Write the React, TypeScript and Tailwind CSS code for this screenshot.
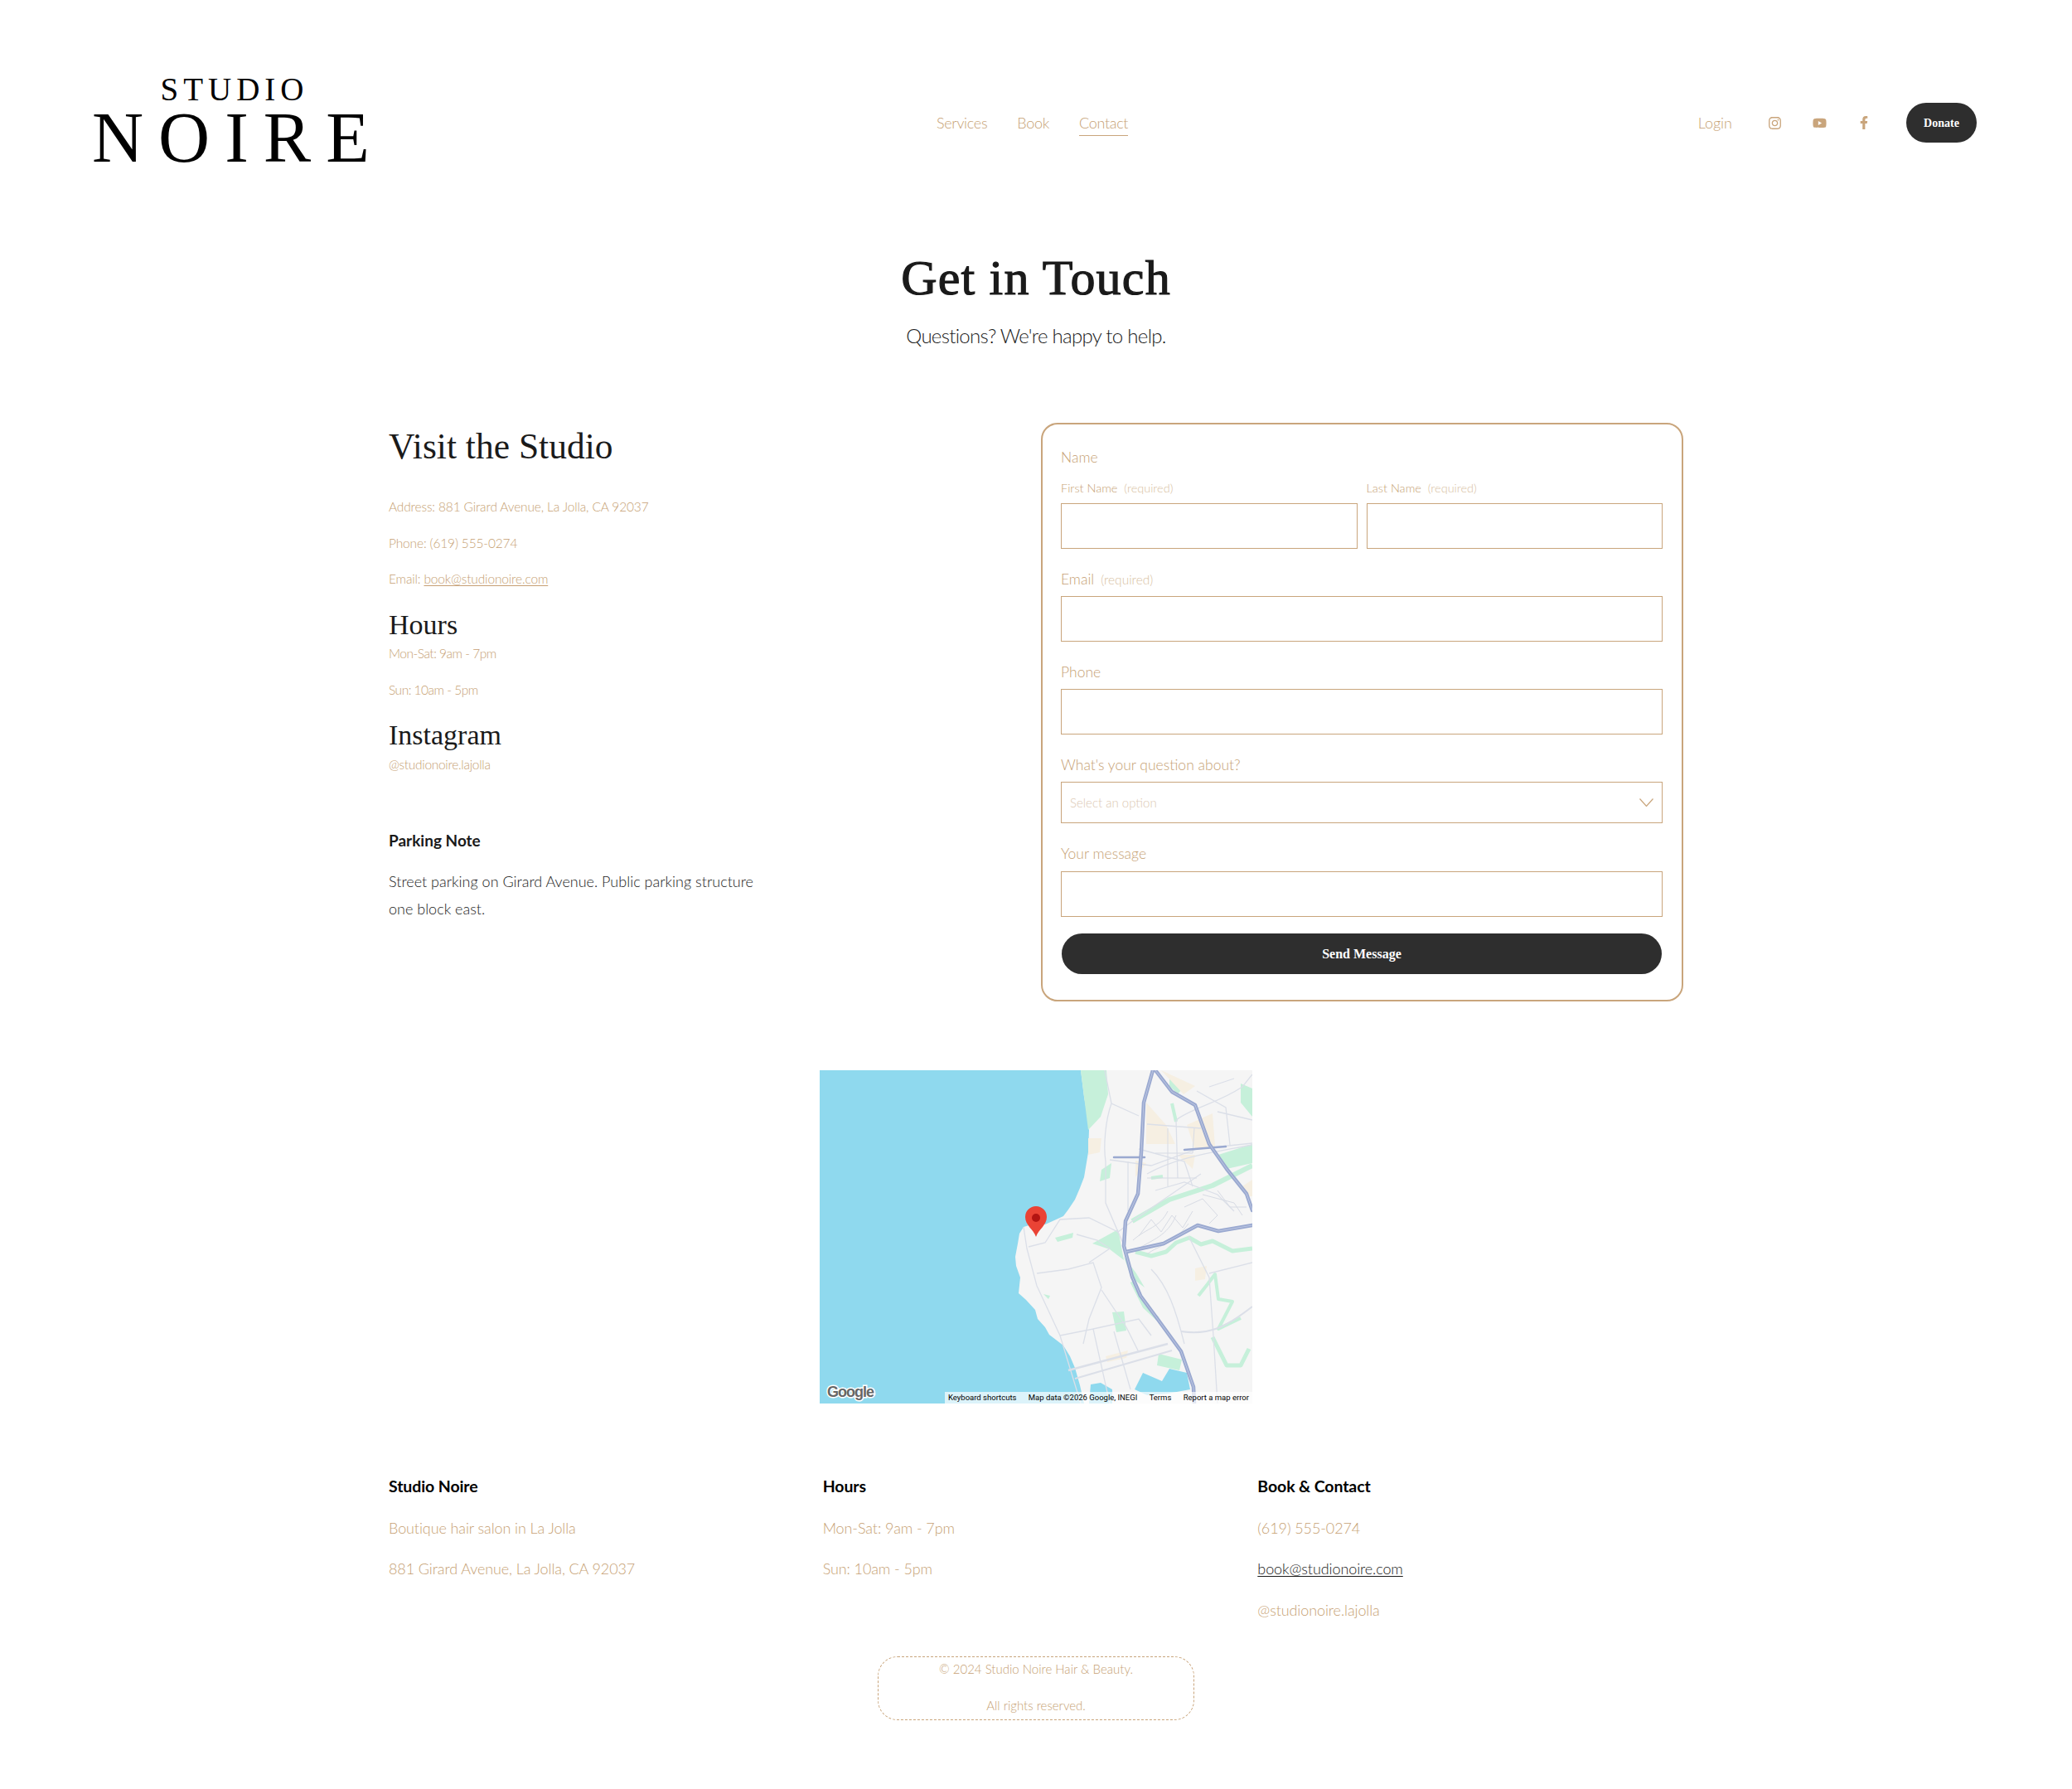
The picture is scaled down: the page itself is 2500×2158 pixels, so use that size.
import { FaFacebookF, FaInstagram, FaYoutube } from "react-icons/fa";

const serif = "font-['Liberation_Serif',serif]";

function Field({ label, note, box }: { label: string; note?: string; box: string }) {
  return (
    <label className="block">
      <span className="block text-[17.5px] leading-[24px] text-[#c69f74]">
        {label}
        {note && <span className="ml-2 text-[15.5px] text-[#d8bfa3]">{note}</span>}
      </span>
      <span className={`block border border-[#c9a57c] ${box}`} />
    </label>
  );
}

function MapView() {
  return (
    <div className="relative mx-auto mt-[84px] h-[402px] w-[522px] overflow-hidden">
      <svg viewBox="0 0 522 402" className="block h-full w-full">
        <rect width="522" height="402" fill="#8fd9ee" />
        <path
          d="M315 0 L319 32 L323 55 L325 72 L324 99 L319 129 L314 142 L308 156 L300 168 L294 176 L281 182 L272 186 L263 184 L246 189 L241 197 L239 209 L236 225 L237 236 L242 250 L240 269 L249 277 L260 289 L263 300 L272 310 L277 319 L294 332 L302 345 L308 359 L314 380 L319 402 L522 402 L522 0 Z"
          fill="#f5f5f5"
        />
        {/* parks */}
        <g fill="#c6f0da">
          <path d="M315 0 L346 0 L348 29 L339 56 L324 72 L319 32 Z" />
          <path d="M422 9 L440 19 L432 29 L422 19 Z" />
          <path d="M508 16 L522 22 L522 56 L508 39 Z" />
          <path d="M481 102 L522 89 L522 112 L491 119 Z" />
          <path d="M329 209 L360 192 L367 229 L350 216 Z" />
          <path d="M367 225 L382 245 L392 262 L376 250 Z" />
          <path d="M284 202 L306 196 L305 202 L287 207 Z" />
          <path d="M353 292 L367 291 L370 314 L358 316 Z" />
          <path d="M409 342 L437 349 L434 362 L407 356 Z" />
          <path d="M340 120 L352 112 L350 130 L338 134 Z" />
          <path d="M270 270 L278 272 L276 276 Z" />
        </g>
        <g fill="none" stroke="#c6f0da" strokeLinejoin="round">
          <path d="M377 182 L422 156 L474 139 L522 115" strokeWidth="6" />
          <path d="M381 219 L400 224 L418 219 L430 208 L446 202 L460 210 L474 206 L498 218 L522 215" strokeWidth="5" />
          <path d="M457 272 L468 258 L477 246 L481 276 L498 279 L481 312 L508 299" strokeWidth="4" />
          <path d="M474 322 L491 356 L508 356 L518 336" strokeWidth="5" />
          <path d="M400 60 L408 85 M425 40 L430 62 M400 130 L414 128" strokeWidth="4" />
          <path d="M377 255 L392 285 L408 300" strokeWidth="5" />
        </g>
        {/* built up areas */}
        <g fill="#f6efe2">
          <path d="M394 39 L418 66 L429 89 L394 89 Z" />
          <path d="M443 66 L474 52 L477 92 L453 96 Z" />
          <path d="M381 109 L394 112 L381 129 Z" />
          <path d="M432 102 L453 102 L450 119 Z" />
          <path d="M453 239 L467 236 L465 252 L453 254 Z" />
          <path d="M412 0 L453 19 L439 29 Z" />
          <path d="M324 82 L340 82 L338 99 L324 102 Z" />
          <path d="M345 345 L372 338 L370 347 L347 352 Z" />
          <path d="M510 140 L522 132 L522 152 L514 152 Z" />
        </g>
        {/* bay */}
        <path
          d="M380 385 L390 365 L413 375 L422 360 L443 365 L447 385 L420 390 L395 392 Z M325 402 L327 379 L339 377 L353 385 L353 402 Z"
          fill="#8fd9ee"
        />
        {/* local roads */}
        <g fill="none" stroke="#dbdfe8" strokeWidth="1.3">
          <path d="M344 0 L352 40 L385 55" />
          <path d="M352 40 C345 60 342 90 345 110 L345 160 L360 195 L372 222" />
          <path d="M246 189 L250 215 L262 260 L290 320 L315 402" />
          <path d="M252 213 L272 208 L290 180 L325 178 L360 195 L380 180 L460 125" />
          <path d="M262 245 L300 240 L330 232 L340 262 L325 300 L318 330" />
          <path d="M325 232 L350 215 L335 205 L310 198" />
          <path d="M340 265 L370 310 L385 340" />
          <path d="M290 320 L330 312 L350 402" />
          <path d="M330 312 L385 300 L400 320" />
          <path d="M355 315 L375 385" />
          <path d="M300 362 L420 330" strokeWidth="2.5" />
          <path d="M308 372 L425 338" strokeWidth="2" />
          <path d="M436 315 C470 320 490 310 522 285" strokeWidth="2" />
          <path d="M445 200 L470 250 L475 320 L480 402" />
          <path d="M470 245 L522 232" />
          <path d="M395 125 C430 105 470 100 522 90" />
          <path d="M350 108 L400 115 L455 95 L522 88" />
          <path d="M430 60 C450 45 480 40 510 20 L522 5" />
          <path d="M400 240 C420 260 430 290 440 330" />
          <path d="M405 145 L440 135 L480 150 L500 170" />
          <path d="M385 95 L440 110 L450 140 M430 60 L432 130 M395 65 L460 70 M372 110 L372 170" />
          <path d="M455 25 L490 45 L495 90 M470 20 L500 10 M480 50 L522 60" />
        </g>
        {/* subdivision streets */}
        <g fill="none" stroke="#d7dbe4" strokeWidth="1">
          <path d="M378 205 C395 190 410 190 420 170 M385 215 C400 205 420 200 430 175 M395 222 C410 210 425 212 445 185" />
          <path d="M440 165 L462 155 L480 175 L470 185 M462 150 L500 160 L510 175 M480 145 L495 165 L515 165" />
          <path d="M405 100 L450 100 L452 70 M395 130 L455 130 M420 70 L420 140" />
          <path d="M385 200 L400 180 L412 195 L425 175 L438 190 L450 170" />
        </g>
        {/* freeways */}
        <g fill="none" stroke="#9aa9d0" strokeLinecap="round" strokeLinejoin="round" strokeWidth="4.5">
          <path d="M402 0 L391 39 L388 99 L384 149 L369 182 L367 212 L377 249 L387 272 L412 306 L436 339 L451 382 L452 402" />
          <path d="M405 0 L425 26 L453 42 L470 89 L491 119 L515 149 L522 169" />
          <path d="M370 219 L415 209 L456 187 L481 194 L522 187" />
          <path d="M355 105 L392 105 M440 96 L490 92" strokeWidth="2.5" />
        </g>
        <g fill="none" stroke="#bcc6e2" strokeLinecap="round" strokeLinejoin="round" strokeWidth="1">
          <path d="M402 0 L391 39 L388 99 L384 149 L369 182 L367 212 L377 249 L387 272 L412 306 L436 339 L451 382 L452 402" />
          <path d="M405 0 L425 26 L453 42 L470 89 L491 119 L515 149 L522 169" />
          <path d="M370 219 L415 209 L456 187 L481 194 L522 187" />
        </g>
        {/* pin */}
        <path
          d="M261 201 C258 192 248 187 248 177 A13 13 0 0 1 274 177 C274 187 264 192 261 201 Z"
          fill="#ea4335"
        />
        <circle cx="261" cy="178" r="5" fill="#b31412" />
        <text
          x="9"
          y="394"
          fill="#666666"
          stroke="#ffffff"
          strokeWidth="3"
          paintOrder="stroke"
          fontFamily="Liberation Sans, sans-serif"
          fontSize="18"
          fontWeight="700"
          letterSpacing="-1"
        >
          Google
        </text>
      </svg>
      <div className="absolute bottom-0 right-0 flex h-[14px] w-[371px] items-center justify-between bg-[#ffffffb0] px-[4px] font-['Roboto',sans-serif] text-[9.5px] font-normal leading-none text-black">
        <span>Keyboard shortcuts</span>
        <span>Map data ©2026 Google, INEGI</span>
        <span>Terms</span>
        <span>Report a map error</span>
      </div>
    </div>
  );
}

export default function App() {
  return (
    <div className="min-h-[2158px] bg-white font-['Lato',sans-serif] font-light text-[#1a1a1a]">
      <header className="flex h-[227px] items-start pl-[111px] pr-[115px] pt-[90px]">
        <div className={`w-[336px] shrink-0 text-center text-black ${serif}`}>
          <div className="pl-[8px] pt-[3px] text-[39px] leading-[30px] tracking-[6px]">STUDIO</div>
          <div className="mt-[5px] text-[86px] leading-[76px] tracking-[18px]">NOIRE</div>
        </div>
        <nav className="ml-[683px] mt-[44px] flex gap-[36px] text-[18px] leading-[28px] tracking-[-0.3px] text-[#c69f74]">
          <a>Services</a>
          <a>Book</a>
          <a className="border-b border-[#c9a57c] pb-[1px]">Contact</a>
        </nav>
        <div className="ml-auto mt-[34px] flex items-center text-[#c9a57c]">
          <a className="text-[18px] leading-[28px] text-[#c69f74]">Login</a>
          <FaInstagram className="ml-[43px] h-[17px] w-[17px]" />
          <FaYoutube className="ml-[37px] h-[17px] w-[17px]" />
          <FaFacebookF className="ml-[37px] h-[16px] w-[16px]" />
          <a
            className={`ml-[43px] flex h-[48px] w-[85px] items-center justify-center rounded-full bg-[#2e2e2e] text-[14px] font-bold text-white ${serif}`}
          >
            Donate
          </a>
        </div>
      </header>

      <main className="mx-auto w-[1562px]">
        <div className="text-center">
          <h1
            className={`mt-[73px] text-[60px] font-normal leading-[70px] tracking-[1.2px] [-webkit-text-stroke:1.2px_#1a1a1a] ${serif}`}
          >
            Get in Touch
          </h1>
          <p className="mt-[17px] text-[24px] leading-[36px] tracking-[-0.7px]">Questions? We're happy to help.</p>
        </div>

        <section className="mt-[87px] flex items-start">
          <div className="w-[787px] shrink-0">
            <h2 className={`text-[43.5px] font-normal leading-[56px] ${serif}`}>Visit the Studio</h2>
            <div className="text-[15.5px] leading-[24px] tracking-[-0.15px] text-[#c69f74]">
              <p className="mt-[33px]">Address: 881 Girard Avenue, La Jolla, CA 92037</p>
              <p className="mt-[20px]">Phone: (619) 555-0274</p>
              <p className="mt-[19px]">
                Email: <a className="underline underline-offset-2">book@studionoire.com</a>
              </p>
            </div>
            <h3 className={`mt-[22px] text-[34px] font-normal leading-[44px] ${serif}`}>Hours</h3>
            <div className="text-[15.5px] leading-[24px] tracking-[-0.5px] text-[#c69f74]">
              <p>Mon-Sat: 9am - 7pm</p>
              <p className="mt-[20px]">Sun: 10am - 5pm</p>
            </div>
            <h3 className={`mt-[21px] text-[34px] font-normal leading-[44px] ${serif}`}>Instagram</h3>
            <p className="mt-px text-[15.5px] leading-[24px] tracking-[-0.3px] text-[#c69f74]">@studionoire.lajolla</p>
            <h4 className="mt-[68px] text-[19px] font-bold leading-[24px]">Parking Note</h4>
            <p className="mt-[21px] w-[470px] text-[18px] leading-[33px]">
              Street parking on Girard Avenue. Public parking structure one block east.
            </p>
          </div>

          <form className="h-[698px] w-[775px] rounded-[20px] border-2 border-[#c9a57c] pl-[22px] pr-[23px] pt-[28px]">
            <div className="text-[17.5px] leading-[24px] text-[#c69f74]">Name</div>
            <div className="mt-[15px] flex gap-[11px]">
              {["First Name", "Last Name"].map((name) => (
                <div key={name} className="flex-1">
                  <div className="text-[14.5px] leading-[20px] text-[#c69f74]">
                    {name} <span className="ml-1 text-[#d8bfa3]">(required)</span>
                  </div>
                  <div className="mt-2 h-[55px] border border-[#c9a57c]" />
                </div>
              ))}
            </div>
            <div className="mt-[25px]">
              <Field label="Email" note="(required)" box="mt-2 h-[55px]" />
            </div>
            <div className="mt-[25px]">
              <Field label="Phone" box="mt-2 h-[55px]" />
            </div>
            <div className="mt-[25px]">
              <div className="text-[17.5px] leading-[24px] text-[#c69f74]">What's your question about?</div>
              <div className="mt-2 flex h-[50px] items-center justify-between border border-[#c9a57c] px-[10px] text-[15px] text-[#dcc8b2]">
                Select an option
                <svg viewBox="0 0 17 10" className="h-[10px] w-[17px]" fill="none" stroke="#c9a57c" strokeWidth="1.2">
                  <path d="M0.5 0.5 L8.5 9.5 L16.5 0.5" />
                </svg>
              </div>
            </div>
            <div className="mt-[25px]">
              <Field label="Your message" box="mt-[9px] h-[55px]" />
            </div>
            <button
              type="button"
              className={`mx-px mt-[20px] block h-[49px] w-[724px] rounded-full bg-[#2e2e2e] text-[16px] font-bold text-white ${serif}`}
            >
              Send Message
            </button>
          </form>
        </section>

        <div className="-mt-px">
          <MapView />
        </div>

        <footer className="mt-[88px] grid grid-cols-3 text-[18px] leading-[24px] tracking-[-0.1px] text-[#c69f74]">
          <div className="flex flex-col gap-[25.5px]">
            <h5 className="text-[19.5px] font-bold text-black">Studio Noire</h5>
            <p>Boutique hair salon in La Jolla</p>
            <p>881 Girard Avenue, La Jolla, CA 92037</p>
          </div>
          <div className="flex flex-col gap-[25.5px] pl-[3px]">
            <h5 className="text-[19.5px] font-bold text-black">Hours</h5>
            <p>Mon-Sat: 9am - 7pm</p>
            <p>Sun: 10am - 5pm</p>
          </div>
          <div className="flex flex-col gap-[25.5px] pl-[7px]">
            <h5 className="text-[19.5px] font-bold text-black">Book &amp; Contact</h5>
            <p>(619) 555-0274</p>
            <p>
              <a className="text-[#1a1a1a] underline underline-offset-2">book@studionoire.com</a>
            </p>
            <p>@studionoire.lajolla</p>
          </div>
        </footer>

        <div className="mx-auto mt-[44px] h-[77px] w-[382px] rounded-[24px] border border-dashed border-[#c9a57c] pt-[4px] text-center text-[15px] leading-[20px] text-[#c69f74]">
          <p>© 2024 Studio Noire Hair &amp; Beauty.</p>
          <p className="mt-[24px]">All rights reserved.</p>
        </div>
      </main>
    </div>
  );
}
